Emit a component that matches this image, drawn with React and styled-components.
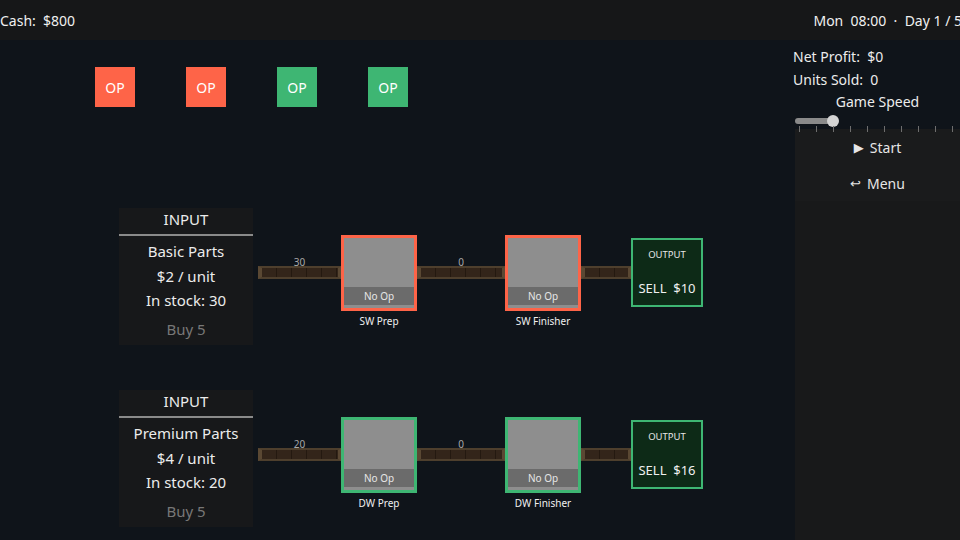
import React from "react";
import styled, { createGlobalStyle } from "styled-components";

const GlobalStyle = createGlobalStyle`
  html, body {
    margin: 0;
    padding: 0;
    background: #0f141a;
  }
  body {
    font-family: "Noto Sans", "Open Sans", sans-serif;
    color: #ececec;
  }
`;

const ops = ["red", "red", "green", "green"];

const lines = [
  {
    part: "Basic Parts",
    price: 2,
    stock: 30,
    tone: "red",
    prefix: "SW",
    sell: 10,
  },
  {
    part: "Premium Parts",
    price: 4,
    stock: 20,
    tone: "green",
    prefix: "DW",
    sell: 16,
  },
];

const ticks = Array.from({ length: 11 });

const App = () => {
  return (
    <StyledScreen>
      <GlobalStyle />
      <StyledTopBar>
        <StyledTopText>Cash:  $800</StyledTopText>
        <StyledTopText>Mon  08:00  ·  Day 1 / 5</StyledTopText>
      </StyledTopBar>
      <StyledBody>
        <StyledCanvas>
          <StyledOpRow>
            {ops.map((tone, i) => (
              <StyledOpButton key={i} tone={tone}>
                OP
              </StyledOpButton>
            ))}
          </StyledOpRow>
          {lines.map((line) => (
            <StyledLine key={line.part}>
              <StyledInput>
                <StyledInputHead>INPUT</StyledInputHead>
                <StyledInputText>{line.part}</StyledInputText>
                <StyledInputText>${line.price} / unit</StyledInputText>
                <StyledInputText>In stock: {line.stock}</StyledInputText>
                <StyledBuy>Buy 5</StyledBuy>
              </StyledInput>
              <StyledChain>
                <Belt width={83} count={line.stock} />
                <Machine tone={line.tone} name={`${line.prefix} Prep`} />
                <Belt width={88} count={0} />
                <Machine tone={line.tone} name={`${line.prefix} Finisher`} />
                <Belt width={50} />
                <StyledOutput>
                  <StyledOutputHead>OUTPUT</StyledOutputHead>
                  <StyledOutputSell>SELL  ${line.sell}</StyledOutputSell>
                </StyledOutput>
              </StyledChain>
            </StyledLine>
          ))}
        </StyledCanvas>
        <StyledSidebar>
          <StyledStats>
            <StyledStat>Net Profit:  $0</StyledStat>
            <StyledStat>Units Sold:  0</StyledStat>
            <StyledSpeedTitle>Game Speed</StyledSpeedTitle>
            <StyledSlider>
              <StyledSliderFill />
              <StyledGrabber />
              <StyledTicks>
                {ticks.map((_, i) => (
                  <StyledTick key={i} />
                ))}
              </StyledTicks>
            </StyledSlider>
          </StyledStats>
          <StyledPanel>
            <StyledMenuButton>
              <StyledGlyph>▶</StyledGlyph> Start
            </StyledMenuButton>
            <StyledMenuButton>
              <StyledGlyph>↩</StyledGlyph> Menu
            </StyledMenuButton>
          </StyledPanel>
        </StyledSidebar>
      </StyledBody>
    </StyledScreen>
  );
};

const Belt = ({ width, count }) => (
  <StyledBeltWrap width={width}>
    <StyledBeltLabel>{count !== undefined ? count : "\u00a0"}</StyledBeltLabel>
    <StyledBelt />
  </StyledBeltWrap>
);

const Machine = ({ tone, name }) => (
  <StyledMachineWrap>
    <StyledMachine tone={tone}>
      <StyledNoOp>No Op</StyledNoOp>
    </StyledMachine>
    <StyledMachineName>{name}</StyledMachineName>
  </StyledMachineWrap>
);

const toneColor = (tone) => (tone === "red" ? "#fe6448" : "#3eb673");

const StyledScreen = styled.div`
  width: 960px;
  height: 540px;
  overflow: hidden;
  display: flex;
  flex-direction: column;
  background: #0f141a;
`;

const StyledTopBar = styled.div`
  height: 40px;
  flex-shrink: 0;
  background: #161718;
  display: flex;
  align-items: center;
  justify-content: space-between;
`;

const StyledTopText = styled.div`
  font-size: 14px;
  white-space: pre;
  color: #f0f0f0;
  margin-right: -2px;
`;

const StyledBody = styled.div`
  flex: 1;
  display: flex;
  min-height: 0;
`;

const StyledCanvas = styled.div`
  flex: 1;
  display: flex;
  flex-direction: column;
`;

const StyledOpRow = styled.div`
  display: flex;
  gap: 51px;
  padding: 27px 0 0 95px;
  margin-bottom: 101px;
`;

const StyledOpButton = styled.div`
  width: 40px;
  height: 40px;
  display: flex;
  align-items: center;
  justify-content: center;
  font-size: 14px;
  color: #fff;
  background: ${(p) => toneColor(p.tone)};
`;

const StyledLine = styled.div`
  display: flex;
  align-items: flex-start;
  padding-left: 119px;
  margin-bottom: 45px;
`;

const StyledInput = styled.div`
  width: 134px;
  height: 137px;
  background: #17181a;
  display: flex;
  flex-direction: column;
  align-items: center;
  box-sizing: border-box;
`;

const StyledInputHead = styled.div`
  width: 100%;
  text-align: center;
  font-size: 15px;
  line-height: 22px;
  padding-bottom: 4px;
  border-bottom: 2px solid #8a8a8a;
  margin-bottom: 3px;
`;

const StyledInputText = styled.div`
  font-size: 15px;
  line-height: 24.5px;
`;

const StyledBuy = styled.div`
  font-size: 15px;
  line-height: 22px;
  margin-top: 5px;
  color: #777777;
`;

const StyledChain = styled.div`
  display: flex;
  align-items: flex-start;
  margin-top: 27px;
  margin-left: 5px;
`;

const StyledBeltWrap = styled.div`
  width: ${(p) => p.width}px;
  display: flex;
  flex-direction: column;
  align-items: center;
  margin-top: 22px;
`;

const StyledBeltLabel = styled.div`
  font-size: 10px;
  line-height: 10px;
  color: #a8a8a8;
  height: 10px;
  margin-bottom: -1px;
  position: relative;
  z-index: 1;
`;

const StyledBelt = styled.div`
  width: 100%;
  height: 13px;
  box-sizing: border-box;
  border: 2px solid #4e3f2d;
  border-left: 4px solid #5a4833;
  border-right: 3px solid #5a4833;
  background: repeating-linear-gradient(
    90deg,
    #33251a 0px,
    #33251a 14px,
    #241910 14px,
    #241910 15px
  );
`;

const StyledMachineWrap = styled.div`
  display: flex;
  flex-direction: column;
  align-items: center;
`;

const StyledMachine = styled.div`
  width: 76px;
  height: 76px;
  box-sizing: border-box;
  border: 3px solid ${(p) => toneColor(p.tone)};
  background: #8e8e8e;
  display: flex;
  align-items: flex-end;
  padding: 0 0 3px 0;
`;

const StyledNoOp = styled.div`
  flex: 1;
  height: 18px;
  background: #6b6b6b;
  color: #e6e6e6;
  font-size: 10px;
  display: flex;
  align-items: center;
  justify-content: center;
`;

const StyledMachineName = styled.div`
  font-size: 10px;
  margin-top: 3px;
  color: #f0f0f0;
`;

const StyledOutput = styled.div`
  width: 72px;
  height: 69px;
  margin-top: 3px;
  box-sizing: border-box;
  border: 2px solid #3eb673;
  background: #0d2a17;
  display: flex;
  flex-direction: column;
  align-items: center;
`;

const StyledOutputHead = styled.div`
  font-size: 9.5px;
  margin-top: 8px;
  color: #e6e6e6;
`;

const StyledOutputSell = styled.div`
  font-size: 13px;
  white-space: pre;
  margin-top: 18px;
  color: #f0f0f0;
`;

const StyledSidebar = styled.div`
  width: 165px;
  display: flex;
  flex-direction: column;
`;

const StyledStats = styled.div`
  padding-top: 6px;
  display: flex;
  flex-direction: column;
`;

const StyledStat = styled.div`
  font-size: 14px;
  line-height: 22.5px;
  white-space: pre;
  margin-left: -2px;
`;

const StyledSpeedTitle = styled.div`
  font-size: 14px;
  line-height: 22px;
  text-align: center;
`;

const StyledSlider = styled.div`
  position: relative;
  height: 16px;
`;

const StyledSliderFill = styled.div`
  position: absolute;
  left: 0;
  top: 5px;
  width: 38px;
  height: 6px;
  border-radius: 3px;
  background: #8a8a8a;
`;

const StyledGrabber = styled.div`
  position: absolute;
  left: 32px;
  top: 2px;
  width: 12px;
  height: 12px;
  border-radius: 50%;
  background: #d4d4d4;
`;

const StyledTicks = styled.div`
  position: absolute;
  left: 4px;
  top: 13px;
  display: flex;
  gap: 16px;
`;

const StyledTick = styled.div`
  width: 1px;
  height: 6px;
  background: #6e6e6e;
`;

const StyledPanel = styled.div`
  flex: 1;
  background: #18191a;
  display: flex;
  flex-direction: column;
`;

const StyledMenuButton = styled.div`
  height: 36px;
  display: flex;
  align-items: center;
  justify-content: center;
  gap: 6px;
  font-size: 14px;
  color: #e6e6e6;
  background: #1a1b1c;
`;

const StyledGlyph = styled.span`
  font-size: 13px;
  font-family: "DejaVu Sans", sans-serif;
`;

export default App;
